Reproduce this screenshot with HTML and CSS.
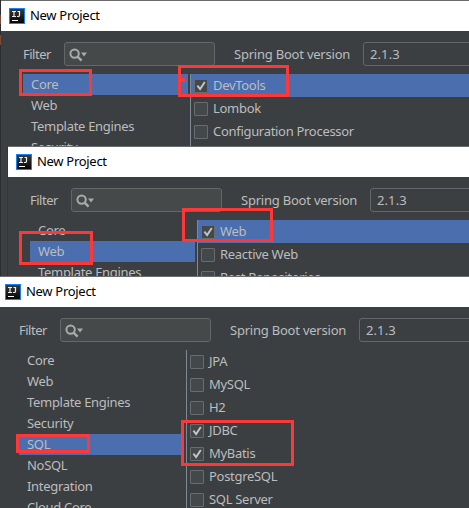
FILE: index.html
```html
<!DOCTYPE html>
<html lang="en">
<head>
<meta charset="utf-8">
<title>New Project</title>
<link rel="stylesheet" href="styles.css">
</head>
<body>
<svg class="defs" width="0" height="0" aria-hidden="true">
  <defs>
    <linearGradient id="shade" x1="0" y1="0" x2="0" y2="1"><stop offset="0" stop-color="#3a3a3a"/><stop offset="1" stop-color="#050505"/></linearGradient>
    <symbol id="idea" viewBox="0 0 16 16">
      <rect width="16" height="16" fill="#1683f5"/>
      <rect x="1" y="1" width="14" height="14" fill="url(#shade)"/>
      <path d="M3 3.5h4M5 3.5v5M3 8.5h4M8.5 3.5H11M10.5 3v4.2q0 1.3-1.3 1.3H8" fill="none" stroke="#eee" stroke-width="1.2"/>
      <path d="M3 12.5h6" stroke="#fff"/>
    </symbol>
    <symbol id="search" viewBox="0 0 18 14">
      <circle cx="5.6" cy="5.6" r="4.2" fill="none" stroke="#a9abac" stroke-width="2"/>
      <path d="M8.6 8.6l4 4" stroke="#a9abac" stroke-width="2.4"/>
      <path d="M12 4.5h6l-3 4z" fill="#a9abac"/>
    </symbol>
    <symbol id="tick" viewBox="0 0 12 12">
      <path d="M2.4 5.7l2.7 3.4L9.8 2" fill="none" stroke="#c3c6c8" stroke-width="1.9"/>
    </symbol>
  </defs>
</svg>
<main class="desktop">
  <section class="window first">
    <header class="titlebar"><svg class="logo"><use href="#idea"/></svg><span>New Project</span></header>
    <div class="toolbar"><span class="filter">Filter</span><div class="field"><svg class="search"><use href="#search"/></svg></div><span class="label">Spring Boot version</span><div class="version">2.1.3</div></div>
    <div class="lists">
      <ul class="categories"><li class="selected">Core</li><li>Web</li><li>Template Engines</li><li>Security</li></ul>
      <ul class="options">
        <li class="selected"><i class="box"><svg><use href="#tick"/></svg></i>DevTools</li>
        <li><i class="box"></i>Lombok</li>
        <li><i class="box"></i>Configuration Processor</li>
      </ul>
    </div>
  </section>
  <section class="window second">
    <header class="titlebar"><svg class="logo"><use href="#idea"/></svg><span>New Project</span></header>
    <div class="toolbar"><span class="filter">Filter</span><div class="field"><svg class="search"><use href="#search"/></svg></div><span class="label">Spring Boot version</span><div class="version">2.1.3</div></div>
    <div class="lists">
      <ul class="categories"><li>Core</li><li class="selected">Web</li><li>Template Engines</li></ul>
      <ul class="options">
        <li class="selected"><i class="box"><svg><use href="#tick"/></svg></i>Web</li>
        <li><i class="box"></i>Reactive Web</li>
        <li><i class="box"></i>Rest Repositories</li>
      </ul>
    </div>
  </section>
  <section class="window third">
    <header class="titlebar"><svg class="logo"><use href="#idea"/></svg><span>New Project</span></header>
    <div class="toolbar"><span class="filter">Filter</span><div class="field"><svg class="search"><use href="#search"/></svg></div><span class="label">Spring Boot version</span><div class="version">2.1.3</div></div>
    <div class="lists">
      <ul class="categories"><li>Core</li><li>Web</li><li>Template Engines</li><li>Security</li><li class="selected">SQL</li><li>NoSQL</li><li>Integration</li><li>Cloud Core</li></ul>
      <ul class="options">
        <li><i class="box"></i>JPA</li>
        <li><i class="box"></i>MySQL</li>
        <li><i class="box"></i>H2</li>
        <li><i class="box"><svg><use href="#tick"/></svg></i>JDBC</li>
        <li><i class="box"><svg><use href="#tick"/></svg></i>MyBatis</li>
        <li><i class="box"></i>PostgreSQL</li>
        <li><i class="box"></i>SQL Server</li>
      </ul>
    </div>
  </section>
  <div class="mark core"></div>
  <div class="mark devtools"></div>
  <div class="dot"></div>
  <div class="mark web"></div>
  <div class="mark web-option"></div>
  <div class="mark sql"></div>
  <div class="mark drivers"></div>
</main>
</body>
</html>
```
FILE: styles.css
```css
* { box-sizing: border-box; }
body {
  margin: 0;
  color: #bbbdbe;
  font: 13px/21px "Noto Sans", sans-serif;
  letter-spacing: -.3px;
}
ul { margin: 0; padding: 0; list-style: none; }
svg { display: block; }
.defs { position: absolute; }
.desktop {
  position: relative;
  width: 469px;
  height: 508px;
  overflow: hidden;
  background: linear-gradient(#2b2d2e 15px, #7b4935 15px 24px, #2b2d2e 24px 35px, #7b4935 35px 45px, #2b2d2e 45px);
}

/* overlapping windows */
.window {
  position: absolute;
  width: 480px;
  overflow: hidden;
  border-top: 1px solid #6b6b6c;
  background: #3c3f41;
}
.first { left: 1px; top: 0; height: 276px; }
.second { left: 8px; top: 146px; height: 130px; box-shadow: -1px 0 #333637; }
.third { left: -3px; top: 276px; height: 233px; }

.titlebar {
  display: flex;
  align-items: center;
  gap: 5px;
  height: 30px;
  padding: 0 0 1px 8px;
  background: #fff;
  color: #000;
}
.logo { width: 16px; height: 16px; }

.toolbar {
  display: flex;
  align-items: center;
  height: 43px;
  padding: 3px 0 0 22px;
  letter-spacing: -.22px;
}
.filter { width: 41px; letter-spacing: -.5px; }
.field {
  width: 151px;
  height: 24px;
  margin-right: 19px;
  padding: 5px 0 0 4px;
  border: 1px solid #646667;
  border-radius: 3px;
  background: #45494a;
}
.search { width: 18px; height: 14px; }
.label { width: 129px; white-space: nowrap; }
.version {
  flex: 1;
  height: 24px;
  padding: 1px 6px;
  border: 1px solid #646667;
  border-radius: 3px;
  letter-spacing: .1px;
}

.lists { display: flex; gap: 2px; padding-left: 22px; }
.categories { width: 165px; }
.categories li { height: 21px; padding-left: 8px; }
.options { flex: 1; border-left: 1px solid #7d8a96; }
.options li {
  display: flex;
  align-items: center;
  gap: 5px;
  height: 23px;
  padding-left: 3px;
}
.first .options { height: 200px; }
.selected { background: #4b6eaf; }
.box {
  width: 14px;
  height: 14px;
  border: 1px solid #6b6b6b;
  border-radius: 1px;
  background: #43494a;
}
.box svg { width: 12px; height: 12px; }

/* highlights drawn over the windows */
.mark { position: absolute; border: 3px solid #fd3838; }
.core { left: 19px; top: 69px; width: 73px; height: 27px; }
.devtools { left: 178px; top: 65px; width: 111px; height: 32px; }
.dot { position: absolute; left: 180px; top: 78px; width: 5px; height: 4px; background: #fd3838; }
.web { left: 19px; top: 231px; width: 74px; height: 34px; }
.web-option { left: 182px; top: 208px; width: 91px; height: 34px; }
.sql { left: 16px; top: 434px; width: 74px; height: 19px; }
.drivers { left: 181px; top: 420px; width: 113px; height: 46px; }
```
